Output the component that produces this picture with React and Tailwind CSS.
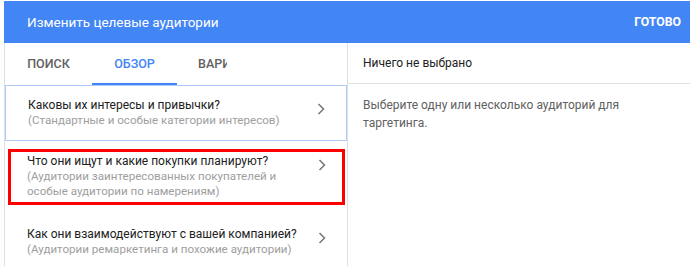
import React from "react";

function Chevron() {
  return (
    <svg width="8" height="12" viewBox="0 0 8 12" className="shrink-0 mt-[5px]">
      <polyline points="1.5,1 6.5,6 1.5,11" fill="none" stroke="#757575" strokeWidth="1.5" />
    </svg>
  );
}

function Item({ title, sub, className = "py-3", children }) {
  return (
    <div className={`relative flex items-start pl-[22px] pr-[21px] ${className}`}>
      <div className="flex-1 leading-[15px]">
        <div className="text-[12px] text-[#212121]">{title}</div>
        <div className="text-[11.6px] text-[#9e9e9e]">{sub}</div>
      </div>
      <Chevron />
      {children}
    </div>
  );
}

export default function App() {
  return (
    <div className="w-[690px] h-[266px] overflow-hidden bg-white pl-[4px] pt-px font-['Roboto',sans-serif]">
      <div className="h-[42px] bg-[#4285f4] flex items-center justify-between pl-[23px] pr-[9px] text-white">
        <span className="text-[13.5px]">Изменить целевые аудитории</span>
        <span className="text-[12.3px] font-bold">ГОТОВО</span>
      </div>
      <div className="flex h-[223px]">
        <div className="w-[344px] border-l border-r border-[#e0e0e0] flex flex-col">
          <div className="h-[42px] w-[222px] overflow-hidden flex shrink-0">
            <div className="w-[87px] shrink-0 flex items-center justify-center text-[12.5px] font-medium text-[#616161]">ПОИСК</div>
            <div className="w-[85px] shrink-0 flex items-center justify-center text-[12.5px] font-medium text-[#4285f4] border-b-2 border-[#4285f4] pt-[2px]">ОБЗОР</div>
            <div className="shrink-0 flex items-center pl-[21px] text-[12.5px] font-medium text-[#616161] whitespace-nowrap">ВАРИ</div>
          </div>
          <Item
            className="py-3 border border-[#aecbfa]"
            title="Каковы их интересы и привычки?"
            sub="(Стандартные и особые категории интересов)"
          />
          <Item
            className="pt-[13px] pb-[16px]"
            title="Что они ищут и какие покупки планируют?"
            sub={<>(Аудитории заинтересованных покупателей и<br />особые аудитории по намерениям)</>}
          >
            <div className="absolute left-[3px] right-[2px] top-[8px] h-[56px] border-[3px] border-[#ff0000] pointer-events-none" />
          </Item>
          <Item
            className="pt-[12px] pb-3"
            title="Как они взаимодействуют с вашей компанией?"
            sub="(Аудитории ремаркетинга и похожие аудитории)"
          />
        </div>
        <div className="flex-1 flex flex-col">
          <div className="h-[41px] border-b border-[#e0e0e0] flex items-center pl-[15px] text-[12px] text-[#212121]">
            Ничего не выбрано
          </div>
          <div className="pl-[15px] pr-[50px] pt-[12px] text-[12px] leading-[18px] text-[#616161]">
            Выберите одну или несколько аудиторий для таргетинга.
          </div>
        </div>
      </div>
    </div>
  );
}
